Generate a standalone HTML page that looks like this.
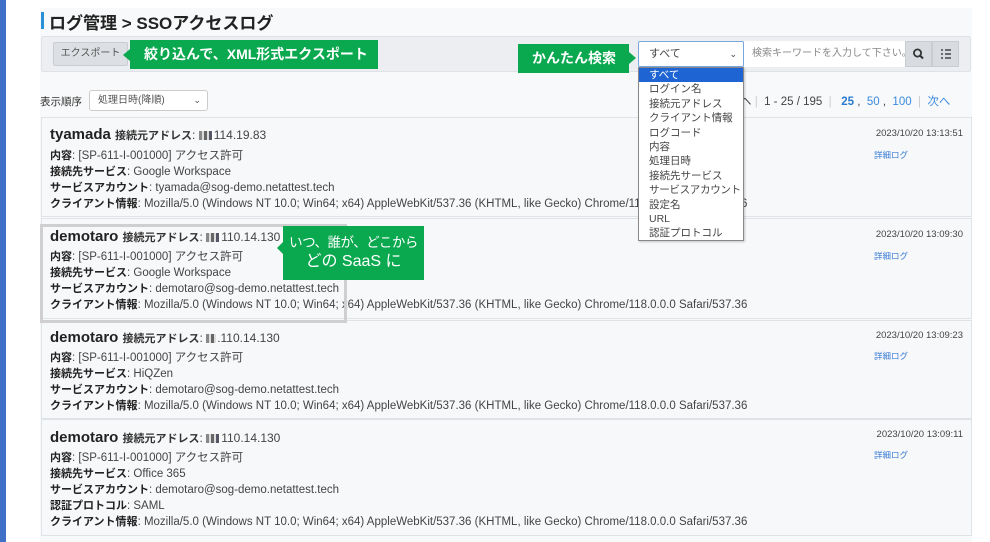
<!DOCTYPE html>
<html><head><meta charset="utf-8"><style>
*{margin:0;padding:0;box-sizing:border-box}
body{width:990px;height:542px;background:#fff;position:relative;overflow:hidden;font-family:"Liberation Sans","Noto Sans CJK JP",sans-serif;color:#333;font-size:11px}
.a{position:absolute;white-space:nowrap}
.card{position:absolute;left:41px;width:931px;background:#f7f8fa;border:1px solid #dfe2e6}
.ln{position:absolute;left:8px;font-size:11.5px;line-height:14px;white-space:nowrap;color:#444}
.ln b{color:#222;font-size:11px}
.nm{position:absolute;left:8px;white-space:nowrap;font-size:15px;font-weight:bold;color:#222}
.nm small{font-size:11px;font-weight:bold;color:#333}
.nm span{font-size:12px;font-weight:normal;color:#444}
.ts{position:absolute;right:8px;font-size:9.5px;color:#444}
.dl{position:absolute;left:832px;font-size:8.5px;color:#3a7bd5}
.blk{display:inline-block;width:14px;height:9px;background:linear-gradient(90deg,#888 0 3px,#ddd 3px 5px,#666 5px 8px,#ddd 8px 10px,#556 10px 13px,#fff 13px);vertical-align:-1px;margin-right:1px}
.green{position:absolute;background:#0aa84f;color:#fff;font-weight:bold;white-space:nowrap}
.dd div{height:14.4px;line-height:14.4px;padding-left:10px;font-size:10.5px;color:#444;white-space:nowrap;overflow:hidden}
</style></head><body>
<div class="a" style="left:0;top:0;width:6px;height:542px;background:#3f6fc6"></div>
<div class="a" style="left:40px;top:8px;width:932px;height:534px;background:#f8f9fa"></div>
<div class="a" style="left:41px;top:12px;width:3px;height:17px;background:#2a90d8"></div>
<div class="a" style="left:49px;top:9px;font-size:17px;font-weight:bold;color:#222">ログ管理 &gt; SSOアクセスログ</div>
<div class="a" style="left:41px;top:36px;width:930px;height:36px;background:#eceef1;border:1px solid #e0e3e6;border-radius:2px"></div>
<div class="a" style="left:53px;top:42px;width:75px;height:24px;background:#dcdfe3;border:1px solid #c9cdd2;border-radius:2px;font-size:10px;color:#555;text-align:center;line-height:22px">エクスポート</div>
<div class="green" style="left:130px;top:40px;width:248px;height:29px;font-size:14px;line-height:29px;padding-left:14px">絞り込んで、XML形式エクスポート</div>
<div class="a" style="left:123px;top:49px;width:0;height:0;border:6px solid transparent;border-right:7px solid #0aa84f;border-left:0"></div>
<div class="green" style="left:518px;top:44px;width:111px;height:29px;font-size:14px;line-height:29px;padding-left:14px">かんたん検索</div>
<div class="a" style="left:629px;top:52px;width:0;height:0;border:6px solid transparent;border-left:7px solid #0aa84f;border-right:0"></div>
<div class="a" style="left:638px;top:41px;width:106px;height:26px;background:#fff;border:1px solid #7aa6e0;border-radius:2px;font-size:11px;color:#444;line-height:24px;padding-left:10px">すべて<span style="position:absolute;right:6px;font-size:9px">&#8964;</span></div>
<div class="a" style="left:744px;top:41px;width:161px;height:26px;background:#fff;font-size:10px;color:#888;line-height:26px;padding-left:8px;overflow:hidden">検索キーワードを入力して下さい。</div>
<div class="a" style="left:905px;top:41px;width:27px;height:26px;background:#d8dce1;border:1px solid #c9cdd2"><svg width="27" height="26" style="position:absolute;left:-1px;top:-1px"><circle cx="12.5" cy="12" r="3.6" fill="none" stroke="#333" stroke-width="1.8"/><path d="M15 14.5l3 3" stroke="#333" stroke-width="2"/></svg></div>
<div class="a" style="left:932px;top:41px;width:27px;height:26px;background:#d8dce1;border:1px solid #c9cdd2"><svg width="27" height="26" style="position:absolute;left:-1px;top:-1px"><path d="M9 9h2M9 13h2M9 17h2M13 9h6M13 13h6M13 17h6" stroke="#444" stroke-width="1.5"/></svg></div>
<div class="a" style="left:40px;top:94px;font-size:10.5px;color:#333">表示順序</div>
<div class="a" style="left:89px;top:90px;width:119px;height:21px;background:#fff;border:1px solid #ccc;border-radius:3px;font-size:10px;color:#555;line-height:19px;padding-left:8px">処理日時(降順)<span style="position:absolute;right:6px;font-size:9px">&#8964;</span></div>
<div class="a" style="left:740px;top:93px;font-size:11.5px;color:#444">ヘ <span style="color:#ccc">|</span> &nbsp;1 - 25 / 195 &nbsp;<span style="color:#ccc">|</span> &nbsp;&nbsp;<b style="color:#2a7bd0">25</b> , &nbsp;<span style="color:#3a8ae0">50</span> , &nbsp;<span style="color:#3a8ae0">100</span> &nbsp;<span style="color:#ccc">|</span> &nbsp;<span style="color:#3a8ae0">次へ</span></div>

<div class="card" style="top:117px;height:100px">
<div class="nm" style="top:8px">tyamada <small>接続元アドレス</small><span>: <i class="blk"></i>114.19.83</span></div>
<div class="ln" style="top:31px"><b>内容</b>: [SP-611-I-001000] アクセス許可</div>
<div class="ln" style="top:47px"><b>接続先サービス</b>: Google Workspace</div>
<div class="ln" style="top:63px"><b>サービスアカウント</b>: tyamada@sog-demo.netattest.tech</div>
<div class="ln" style="top:79px"><b>クライアント情報</b>: Mozilla/5.0 (Windows NT 10.0; Win64; x64) AppleWebKit/537.36 (KHTML, like Gecko) Chrome/118.0.0.0 Safari/537.36</div>
<div class="ts" style="top:10px">2023/10/20 13:13:51</div><div class="dl" style="top:31px">詳細ログ</div>
</div>
<div class="card" style="top:218px;height:101px">
<div class="nm" style="top:9px">demotaro <small>接続元アドレス</small><span>: <i class="blk"></i>110.14.130</span></div>
<div class="ln" style="top:31px"><b>内容</b>: [SP-611-I-001000] アクセス許可</div>
<div class="ln" style="top:47px"><b>接続先サービス</b>: Google Workspace</div>
<div class="ln" style="top:63px"><b>サービスアカウント</b>: demotaro@sog-demo.netattest.tech</div>
<div class="ln" style="top:79px"><b>クライアント情報</b>: Mozilla/5.0 (Windows NT 10.0; Win64; x64) AppleWebKit/537.36 (KHTML, like Gecko) Chrome/118.0.0.0 Safari/537.36</div>
<div class="ts" style="top:10px">2023/10/20 13:09:30</div><div class="dl" style="top:31px">詳細ログ</div>
</div>
<div class="card" style="top:320px;height:99px">
<div class="nm" style="top:8px">demotaro <small>接続元アドレス</small><span>: <i class="blk" style="width:10px"></i>.110.14.130</span></div>
<div class="ln" style="top:30px"><b>内容</b>: [SP-611-I-001000] アクセス許可</div>
<div class="ln" style="top:46px"><b>接続先サービス</b>: HiQZen</div>
<div class="ln" style="top:62px"><b>サービスアカウント</b>: demotaro@sog-demo.netattest.tech</div>
<div class="ln" style="top:78px"><b>クライアント情報</b>: Mozilla/5.0 (Windows NT 10.0; Win64; x64) AppleWebKit/537.36 (KHTML, like Gecko) Chrome/118.0.0.0 Safari/537.36</div>
<div class="ts" style="top:9px">2023/10/20 13:09:23</div><div class="dl" style="top:29px">詳細ログ</div>
</div>
<div class="card" style="top:419px;height:117px">
<div class="nm" style="top:9px">demotaro <small>接続元アドレス</small><span>: <i class="blk"></i>110.14.130</span></div>
<div class="ln" style="top:31px"><b>内容</b>: [SP-611-I-001000] アクセス許可</div>
<div class="ln" style="top:47px"><b>接続先サービス</b>: Office 365</div>
<div class="ln" style="top:63px"><b>サービスアカウント</b>: demotaro@sog-demo.netattest.tech</div>
<div class="ln" style="top:79px"><b>認証プロトコル</b>: SAML</div>
<div class="ln" style="top:95px"><b>クライアント情報</b>: Mozilla/5.0 (Windows NT 10.0; Win64; x64) AppleWebKit/537.36 (KHTML, like Gecko) Chrome/118.0.0.0 Safari/537.36</div>
<div class="ts" style="top:9px">2023/10/20 13:09:11</div><div class="dl" style="top:29px">詳細ログ</div>
</div>

<div class="a" style="left:40px;top:224px;width:307px;height:99px;border:3px solid #cfcfd1"></div>
<div class="green" style="left:283px;top:226px;width:141px;height:54px;font-size:13.5px;line-height:19px;text-align:center;padding-top:7px;font-weight:normal;letter-spacing:-0.5px">いつ、誰が、どこから<br><span style="font-size:16px;letter-spacing:0">どの SaaS に</span></div>
<div class="a" style="left:277px;top:242px;width:0;height:0;border:6px solid transparent;border-right:6px solid #0aa84f;border-left:0"></div>

<div class="a dd" style="left:638px;top:67px;width:106px;height:174px;background:#fff;border:1px solid #888;box-shadow:1px 1px 2px rgba(0,0,0,.2)">
<div style="background:#1e64d2;color:#fff">すべて</div><div>ログイン名</div><div>接続元アドレス</div><div>クライアント情報</div><div>ログコード</div><div>内容</div><div>処理日時</div><div>接続先サービス</div><div style="letter-spacing:-0.3px">サービスアカウント</div><div>設定名</div><div>URL</div><div>認証プロトコル</div>
</div>
</body></html>
